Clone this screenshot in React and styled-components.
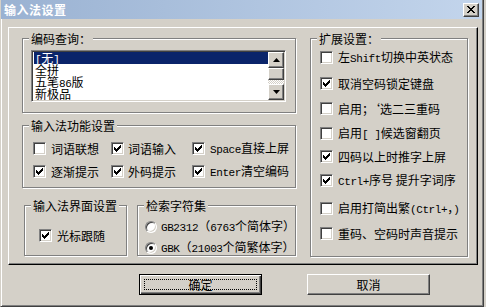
import styled, { createGlobalStyle, css } from "styled-components";

const GlobalStyle = createGlobalStyle`
  html, body {
    margin: 0;
    padding: 0;
    background: #d4d0c8;
  }
  body {
    font-family: "Noto Sans CJK SC", sans-serif;
    font-size: 12px;
    color: #000;
  }
`;

const raised = css`
  background: #d4d0c8;
  border: 1px solid;
  border-color: #fff #404040 #404040 #fff;
  box-shadow: inset -1px -1px 0 #808080;
  box-sizing: border-box;
`;

const Window = styled.div`
  width: 484px;
  height: 307px;
  box-sizing: border-box;
  background: #d4d0c8;
  border-left: 1px solid #d4d0c8;
  border-right: 1px solid #404040;
  border-bottom: 1px solid #404040;
  box-shadow: inset 1px 0 0 #fff, inset -1px -1px 0 #808080;
  display: flex;
  flex-direction: column;
`;

const TitleBar = styled.div`
  height: 19px;
  margin-right: 1px;
  background: linear-gradient(to right, #9ab2d2, #c3d5ec);
  display: flex;
  align-items: center;
  justify-content: space-between;
  padding: 0 3px 0 3px;
`;

const Title = styled.span`
  color: #fff;
  font-weight: bold;
  font-size: 12px;
  letter-spacing: 0.5px;
`;

const CloseButton = styled.div`
  ${raised};
  width: 16px;
  height: 14px;
  display: flex;
  align-items: center;
  justify-content: center;
`;

const Body = styled.div`
  padding: 8px 0 0 7px;
  display: flex;
  flex-direction: column;
`;

const Panel = styled.div`
  width: 470px;
  height: 238px;
  box-sizing: border-box;
  border: 1px solid;
  border-color: #fff #000 #000 #fff;
  box-shadow: inset -1px -1px 0 #808080;
`;

const Columns = styled.div`
  display: grid;
  grid-template-columns: 274px 158px;
  column-gap: 14px;
  padding: 10px 0 0 13px;
`;

const Column = styled.div`
  display: flex;
  flex-direction: column;
`;

const Group = styled.div`
  position: relative;
  box-sizing: border-box;
  height: ${(p) => p.$h}px;
  margin-top: ${(p) => p.$mt || 0}px;
  border: 1px solid #808080;
  box-shadow: inset 1px 1px 0 #fff, 1px 1px 0 #fff;
`;

const Legend = styled.span`
  position: absolute;
  top: -8px;
  left: 6px;
  padding: 0 2px;
  background: #d4d0c8;
  line-height: 15px;
  white-space: nowrap;
`;

const ListPad = styled.div`
  padding: 11px 0 0 8px;
`;

const ListBox = styled.div`
  width: 255px;
  height: 52px;
  box-sizing: border-box;
  background: #fff;
  border: 1px solid;
  border-color: #808080 #fff #fff #808080;
  box-shadow: inset 1px 1px 0 #404040, inset -1px -1px 0 #d4d0c8;
  padding: 1px;
  display: flex;
`;

const Items = styled.div`
  flex: 1;
  padding: 0 0 0 1px;
`;

const Item = styled.div`
  height: 12px;
  line-height: 12px;
  padding-left: 1px;
  white-space: nowrap;
  background: ${(p) => (p.$selected ? "#0a246a" : "transparent")};
  color: ${(p) => (p.$selected ? "#fff" : "#000")};
`;

const ScrollBar = styled.div`
  width: 16px;
  display: flex;
  flex-direction: column;
`;

const ScrollButton = styled.div`
  ${raised};
  height: ${(p) => p.$h}px;
  display: flex;
  align-items: center;
  justify-content: center;
`;

const Track = styled.div`
  flex: 1;
  background-image: conic-gradient(#fff 25%, #d4d0c8 0 50%, #fff 0 75%, #d4d0c8 0);
  background-size: 2px 2px;
`;

const CheckGrid = styled.div`
  display: grid;
  grid-template-columns: 78px 81px auto;
  row-gap: 10px;
  padding: 16px 0 0 10px;
`;

const CheckItem = styled.label`
  display: flex;
  align-items: center;
  gap: ${(p) => p.$gap ?? 5}px;
  height: 13px;
  line-height: 13px;
  white-space: nowrap;
  margin-top: ${(p) => p.$mt || 0}px;
`;

const Box = styled.span`
  flex: none;
  width: 13px;
  height: 13px;
  box-sizing: border-box;
  background: #fff;
  border: 1px solid;
  border-color: #808080 #fff #fff #808080;
  box-shadow: inset 1px 1px 0 #404040, inset -1px -1px 0 #d4d0c8;
  display: flex;
  align-items: center;
  justify-content: center;
`;

const Radio = styled.span`
  position: relative;
  flex: none;
  width: 12px;
  height: 12px;
  box-sizing: border-box;
  border-radius: 50%;
  background: #fff;
  border: 1px solid;
  border-color: #808080 #fff #fff #808080;
  box-shadow: inset 1px 1px 0 #404040, inset -1px -1px 0 #d4d0c8;
  ${(p) =>
    p.$checked &&
    css`
      &::after {
        content: "";
        position: absolute;
        left: 3px;
        top: 3px;
        width: 4px;
        height: 4px;
        border-radius: 50%;
        background: #000;
      }
    `}
`;

const SinglePad = styled.div`
  padding: 23px 0 0 14px;
`;

const BottomRow = styled.div`
  display: flex;
  gap: 10px;
  margin-top: 17px;
  padding-left: 2px;
`;

const RadioList = styled.div`
  display: flex;
  flex-direction: column;
  gap: 8px;
  padding: 14px 0 0 7px;
`;

const ExtList = styled.div`
  display: flex;
  flex-direction: column;
  padding-left: 9px;
`;

const Latin = styled.span`
  font-family: "Liberation Mono", monospace;
  font-size: 11px;
  letter-spacing: -0.4px;
`;

const ButtonRow = styled.div`
  display: flex;
  gap: 45px;
  margin-top: 9px;
  padding-left: 131px;
`;

const Button = styled.div`
  position: relative;
  width: 123px;
  height: 21px;
  box-sizing: border-box;
  background: #d4d0c8;
  display: flex;
  align-items: center;
  justify-content: center;
  line-height: 14px;
  ${(p) =>
    p.$default
      ? css`
          border: 1px solid #000;
          box-shadow: inset 1px 1px 0 #fff, inset -1px -1px 0 #404040,
            inset -2px -2px 0 #808080;
          &::after {
            content: "";
            position: absolute;
            inset: 4px;
            border: 1px dotted #000;
          }
        `
      : css`
          border: 1px solid;
          border-color: #fff #404040 #404040 #fff;
          box-shadow: inset -1px -1px 0 #808080;
        `}
`;

function Mixed({ text }) {
  return text.split(/([\x21-\x7e][\x20-\x7e]*)/).map((part, i) =>
    /^[\x21-\x7e]/.test(part) ? <Latin key={i}>{part}</Latin> : part
  );
}

function Check({ checked }) {
  return (
    <Box>
      {checked && (
        <svg width="9" height="9" viewBox="0 0 9 9" shapeRendering="crispEdges">
          <path d="M1 3h1v1h1v1h1V4h1V3h1V2h1V1h1v3H7v1H6v1H5v1H4v1H3V7H2V6H1z" fill="#000" />
        </svg>
      )}
    </Box>
  );
}

const features = [
  ["词语联想", false],
  ["词语输入", true],
  ["Space直接上屏", true],
  ["逐渐提示", true],
  ["外码提示", true],
  ["Enter清空编码", true],
];

const extras = [
  ["左Shift切换中英状态", false, 12],
  ["取消空码锁定键盘", true, 13],
  ["启用；‘选二三重码", false, 12],
  ["启用[ ]候选窗翻页", false, 12],
  ["四码以上时推字上屏", true, 10],
  ["Ctrl+序号 提升字词序", true, 11],
  ["启用打简出繁(Ctrl+，)", false, 15],
  ["重码、空码时声音提示", false, 12],
];

const codes = ["[无]", "全拼", "五笔86版", "新极品"];

export default function App() {
  return (
    <>
      <GlobalStyle />
      <Window>
        <TitleBar>
          <Title>输入法设置</Title>
          <CloseButton>
            <svg width="8" height="7" viewBox="0 0 8 7" shapeRendering="crispEdges">
              <path d="M0 0h2v1h1v1h2V1h1V0h2v1H7v1H6v1H5v1h1v1h1v1h1v1H6V6H5V5H3v1H2v1H0V6h1V5h1V4h1V3H2V2H1V1H0z" fill="#000" />
            </svg>
          </CloseButton>
        </TitleBar>
        <Body>
          <Panel>
            <Columns>
              <Column>
                <Group $h={75}>
                  <Legend>编码查询：</Legend>
                  <ListPad>
                    <ListBox>
                      <Items>
                        {codes.map((c, i) => (
                          <Item key={c} $selected={i === 0}>
                            <Mixed text={c} />
                          </Item>
                        ))}
                      </Items>
                      <ScrollBar>
                        <ScrollButton $h={16}>
                          <svg width="7" height="4" viewBox="0 0 7 4">
                            <path d="M3.5 0L7 4H0z" fill="#000" />
                          </svg>
                        </ScrollButton>
                        <ScrollButton $h={12} />
                        <Track />
                        <ScrollButton $h={16}>
                          <svg width="7" height="4" viewBox="0 0 7 4">
                            <path d="M0 0h7L3.5 4z" fill="#000" />
                          </svg>
                        </ScrollButton>
                      </ScrollBar>
                    </ListBox>
                  </ListPad>
                </Group>

                <Group $h={63} $mt={12}>
                  <Legend>输入法功能设置</Legend>
                  <CheckGrid>
                    {features.map(([label, on]) => (
                      <CheckItem key={label} $gap={label.startsWith("词语输") || label.startsWith("外码") ? 4 : 5}>
                        <Check checked={on} />
                        <span>
                          <Mixed text={label} />
                        </span>
                      </CheckItem>
                    ))}
                  </CheckGrid>
                </Group>

                <BottomRow>
                  <Group $h={51} style={{ width: 104 }}>
                    <Legend>输入法界面设置</Legend>
                    <SinglePad>
                      <CheckItem>
                        <Check checked />
                        <span>光标跟随</span>
                      </CheckItem>
                    </SinglePad>
                  </Group>
                  <Group $h={51} style={{ flex: 1 }}>
                    <Legend>检索字符集</Legend>
                    <RadioList>
                      <CheckItem $gap={4}>
                        <Radio />
                        <span>
                          <Mixed text="GB2312（6763个简体字）" />
                        </span>
                      </CheckItem>
                      <CheckItem $gap={4}>
                        <Radio $checked />
                        <span>
                          <Mixed text="GBK（21003个简繁体字）" />
                        </span>
                      </CheckItem>
                    </RadioList>
                  </Group>
                </BottomRow>
              </Column>

              <Column>
                <Group $h={219}>
                  <Legend>扩展设置：</Legend>
                  <ExtList>
                    {extras.map(([label, on, mt]) => (
                      <CheckItem key={label} $mt={mt}>
                        <Check checked={on} />
                        <span>
                          <Mixed text={label} />
                        </span>
                      </CheckItem>
                    ))}
                  </ExtList>
                </Group>
              </Column>
            </Columns>
          </Panel>

          <ButtonRow>
            <Button $default>确定</Button>
            <Button>取消</Button>
          </ButtonRow>
        </Body>
      </Window>
    </>
  );
}
